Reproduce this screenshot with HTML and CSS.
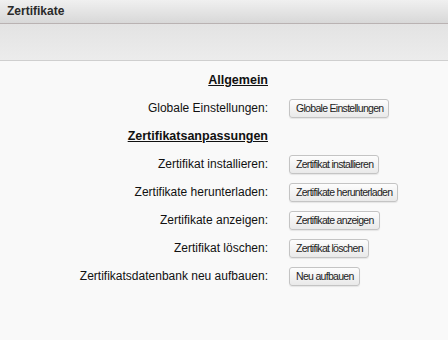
FILE: index.html
```html
<!DOCTYPE html>
<html lang="de">
<head>
    <meta charset="UTF-8">
    <title>Zertifikate</title>
    <link rel="stylesheet" href="styles.css">
</head>
<body>
    <div class="title-bar">Zertifikate</div>
    <div class="toolbar"></div>

    <div class="content">
        <div class="form-grid">
            <div class="section-title">Allgemein</div>
            <div></div>

            <div class="label">Globale Einstellungen:</div>
            <div><button class="btn">Globale Einstellungen</button></div>

            <div class="section-title">Zertifikatsanpassungen</div>
            <div></div>

            <div class="label">Zertifikat installieren:</div>
            <div><button class="btn">Zertifikat installieren</button></div>

            <div class="label">Zertifikate herunterladen:</div>
            <div><button class="btn">Zertifikate herunterladen</button></div>

            <div class="label">Zertifikate anzeigen:</div>
            <div><button class="btn">Zertifikate anzeigen</button></div>

            <div class="label">Zertifikat löschen:</div>
            <div><button class="btn">Zertifikat löschen</button></div>

            <div class="label">Zertifikatsdatenbank neu aufbauen:</div>
            <div><button class="btn">Neu aufbauen</button></div>
        </div>
    </div>
</body>
</html>
```

FILE: styles.css
```css
* {
    margin: 0;
    padding: 0;
    box-sizing: border-box;
}

body {
    font-family: 'Liberation Sans', Arial, sans-serif;
    font-size: 12px;
    color: #111;
    background: #f9f9f9;
    width: 448px;
    height: 340px;
    overflow: hidden;
}

.title-bar {
    height: 24px;
    padding: 0 7px;
    line-height: 23px;
    font-weight: bold;
    font-size: 12px;
    color: #2a2a2a;
    background: linear-gradient(#f0f0f0, #d8d8d8);
    border-bottom: 1px solid #b9b2b2;
}

.toolbar {
    height: 37px;
    background: linear-gradient(#e3e3e3, #ececec);
    border-bottom: 1px solid #cfcfcf;
}

.content {
    padding-top: 5px;
}

.form-grid {
    display: grid;
    grid-template-columns: 268px auto;
    grid-auto-rows: 28px;
    column-gap: 21px;
    align-items: center;
}

.section-title {
    text-align: right;
    font-weight: bold;
    font-size: 12.5px;
    text-decoration: underline;
    color: #111;
}

.label {
    text-align: right;
    font-size: 12px;
}

.btn {
    height: 19px;
    padding: 0 5px 0 6px;
    font-family: 'Liberation Sans', Arial, sans-serif;
    font-size: 10.5px;
    letter-spacing: -0.7px;
    color: #222;
    background: linear-gradient(#fdfdfd, #e9e9e9);
    border: 1px solid #c4c4c4;
    border-radius: 3px;
    box-shadow: 0 1px 1px rgba(0,0,0,0.08);
}
```
